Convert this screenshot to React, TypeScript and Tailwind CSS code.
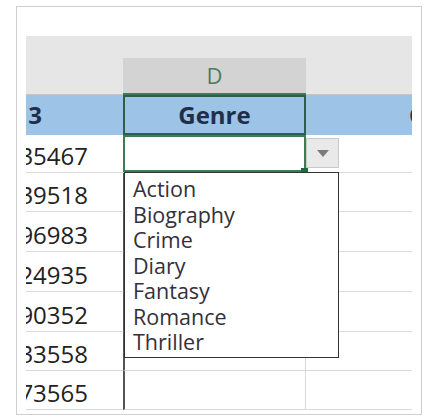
import { useState } from 'react';

const ISBNS = ['135467', '139518', '196983', '124935', '190352', '133558', '73565'];
const ROW_HEIGHTS = ['h-[38px]', 'h-[39px]', 'h-[40px]', 'h-[40px]', 'h-[40px]', 'h-[39px]', 'h-[39px]'];
const GENRES = ['Action', 'Biography', 'Crime', 'Diary', 'Fantasy', 'Romance', 'Thriller'];

function DropdownList({ onPick }: { onPick: (g: string) => void }) {
  return (
    <ul className="absolute left-[1px] top-full z-20 w-[215px] border-[1.5px] border-[#333] bg-white pl-[8px] pt-[3px] pb-[2px]">
      {GENRES.map((g) => (
        <li
          key={g}
          onClick={() => onPick(g)}
          className="h-[25.5px] cursor-default text-[21.5px] font-medium leading-[25.5px] text-[#34303a]"
        >
          {g}
        </li>
      ))}
    </ul>
  );
}

export default function App() {
  const [open, setOpen] = useState(true);
  const [value, setValue] = useState('');

  return (
    <div className="h-[420px] w-[428px] bg-white pl-[16px] pt-[6px] font-['Open_Sans',sans-serif]">
      <div className="h-[409px] w-[406px] border border-[#d0d0d0] bg-white pl-[9px] pt-[29px]">
        <div className="relative w-[386px]">
          {/* column letters */}
          <div className="grid h-[59px] grid-cols-[97px_183px_106px] items-end bg-[#e6e6e6]">
            <div className="h-[37px] border-b border-[#c6c6c6]" />
            <div className="flex h-[37px] items-center justify-center border-b-2 border-[#3b7d55] bg-[#d3d3d3] text-[22px] text-[#4a7d60]">
              D
            </div>
            <div className="h-[37px] border-b border-[#c6c6c6]" />
          </div>

          {/* header row */}
          <div className="grid h-[40px] grid-cols-[97px_183px_106px] bg-[#9dc3e6] text-[24px] font-bold text-[#1f2e4a]">
            <div className="flex items-center justify-end overflow-hidden whitespace-nowrap pr-[81px]">13</div>
            <div className="relative flex items-center justify-center">
              Genre
              <div className="absolute inset-0 border-2 border-[#2f5f4a]" />
            </div>
            <div className="flex items-center overflow-hidden whitespace-nowrap pl-[103px]">C</div>
          </div>

          {/* data rows */}
          {ISBNS.map((isbn, i) => (
            <div key={isbn} className={`grid grid-cols-[97px_183px_106px] ${ROW_HEIGHTS[i]}`}>
              <div className="flex items-end justify-end overflow-hidden whitespace-nowrap border-b border-[#d9d9d9] pr-[35px] text-[24px] leading-[33px] text-[#222]">
                {isbn}
              </div>
              {i === 0 ? (
                <div className="relative border-b border-[#d9d9d9]">
                  <div className="flex h-full items-end pl-[8px] text-[21px] leading-[33px] text-[#222]">{value}</div>
                  <div className="absolute inset-0 border-2 border-[#3b7d55]" />
                  <div className="absolute bottom-[-1px] right-[-2px] h-[5px] w-[7px] bg-[#1f6b3f]" />
                  <button
                    onClick={() => setOpen(!open)}
                    className="absolute left-full top-[3px] z-10 flex h-[30px] w-[33px] items-center justify-center border border-[#c9c9c9] bg-[#e9e9e9]"
                  >
                    <svg width="12" height="7" viewBox="0 0 12 7">
                      <path d="M0 0h12L6 7z" fill="#7a7a7a" />
                    </svg>
                  </button>
                  {open && (
                    <DropdownList
                      onPick={(g) => {
                        setValue(g);
                        setOpen(false);
                      }}
                    />
                  )}
                </div>
              ) : (
                <div className="border-b border-l-2 border-r border-b-[#d9d9d9] border-l-[#555] border-r-[#d9d9d9]" />
              )}
              <div className="border-b border-[#d9d9d9]" />
            </div>
          ))}
        </div>
      </div>
    </div>
  );
}
